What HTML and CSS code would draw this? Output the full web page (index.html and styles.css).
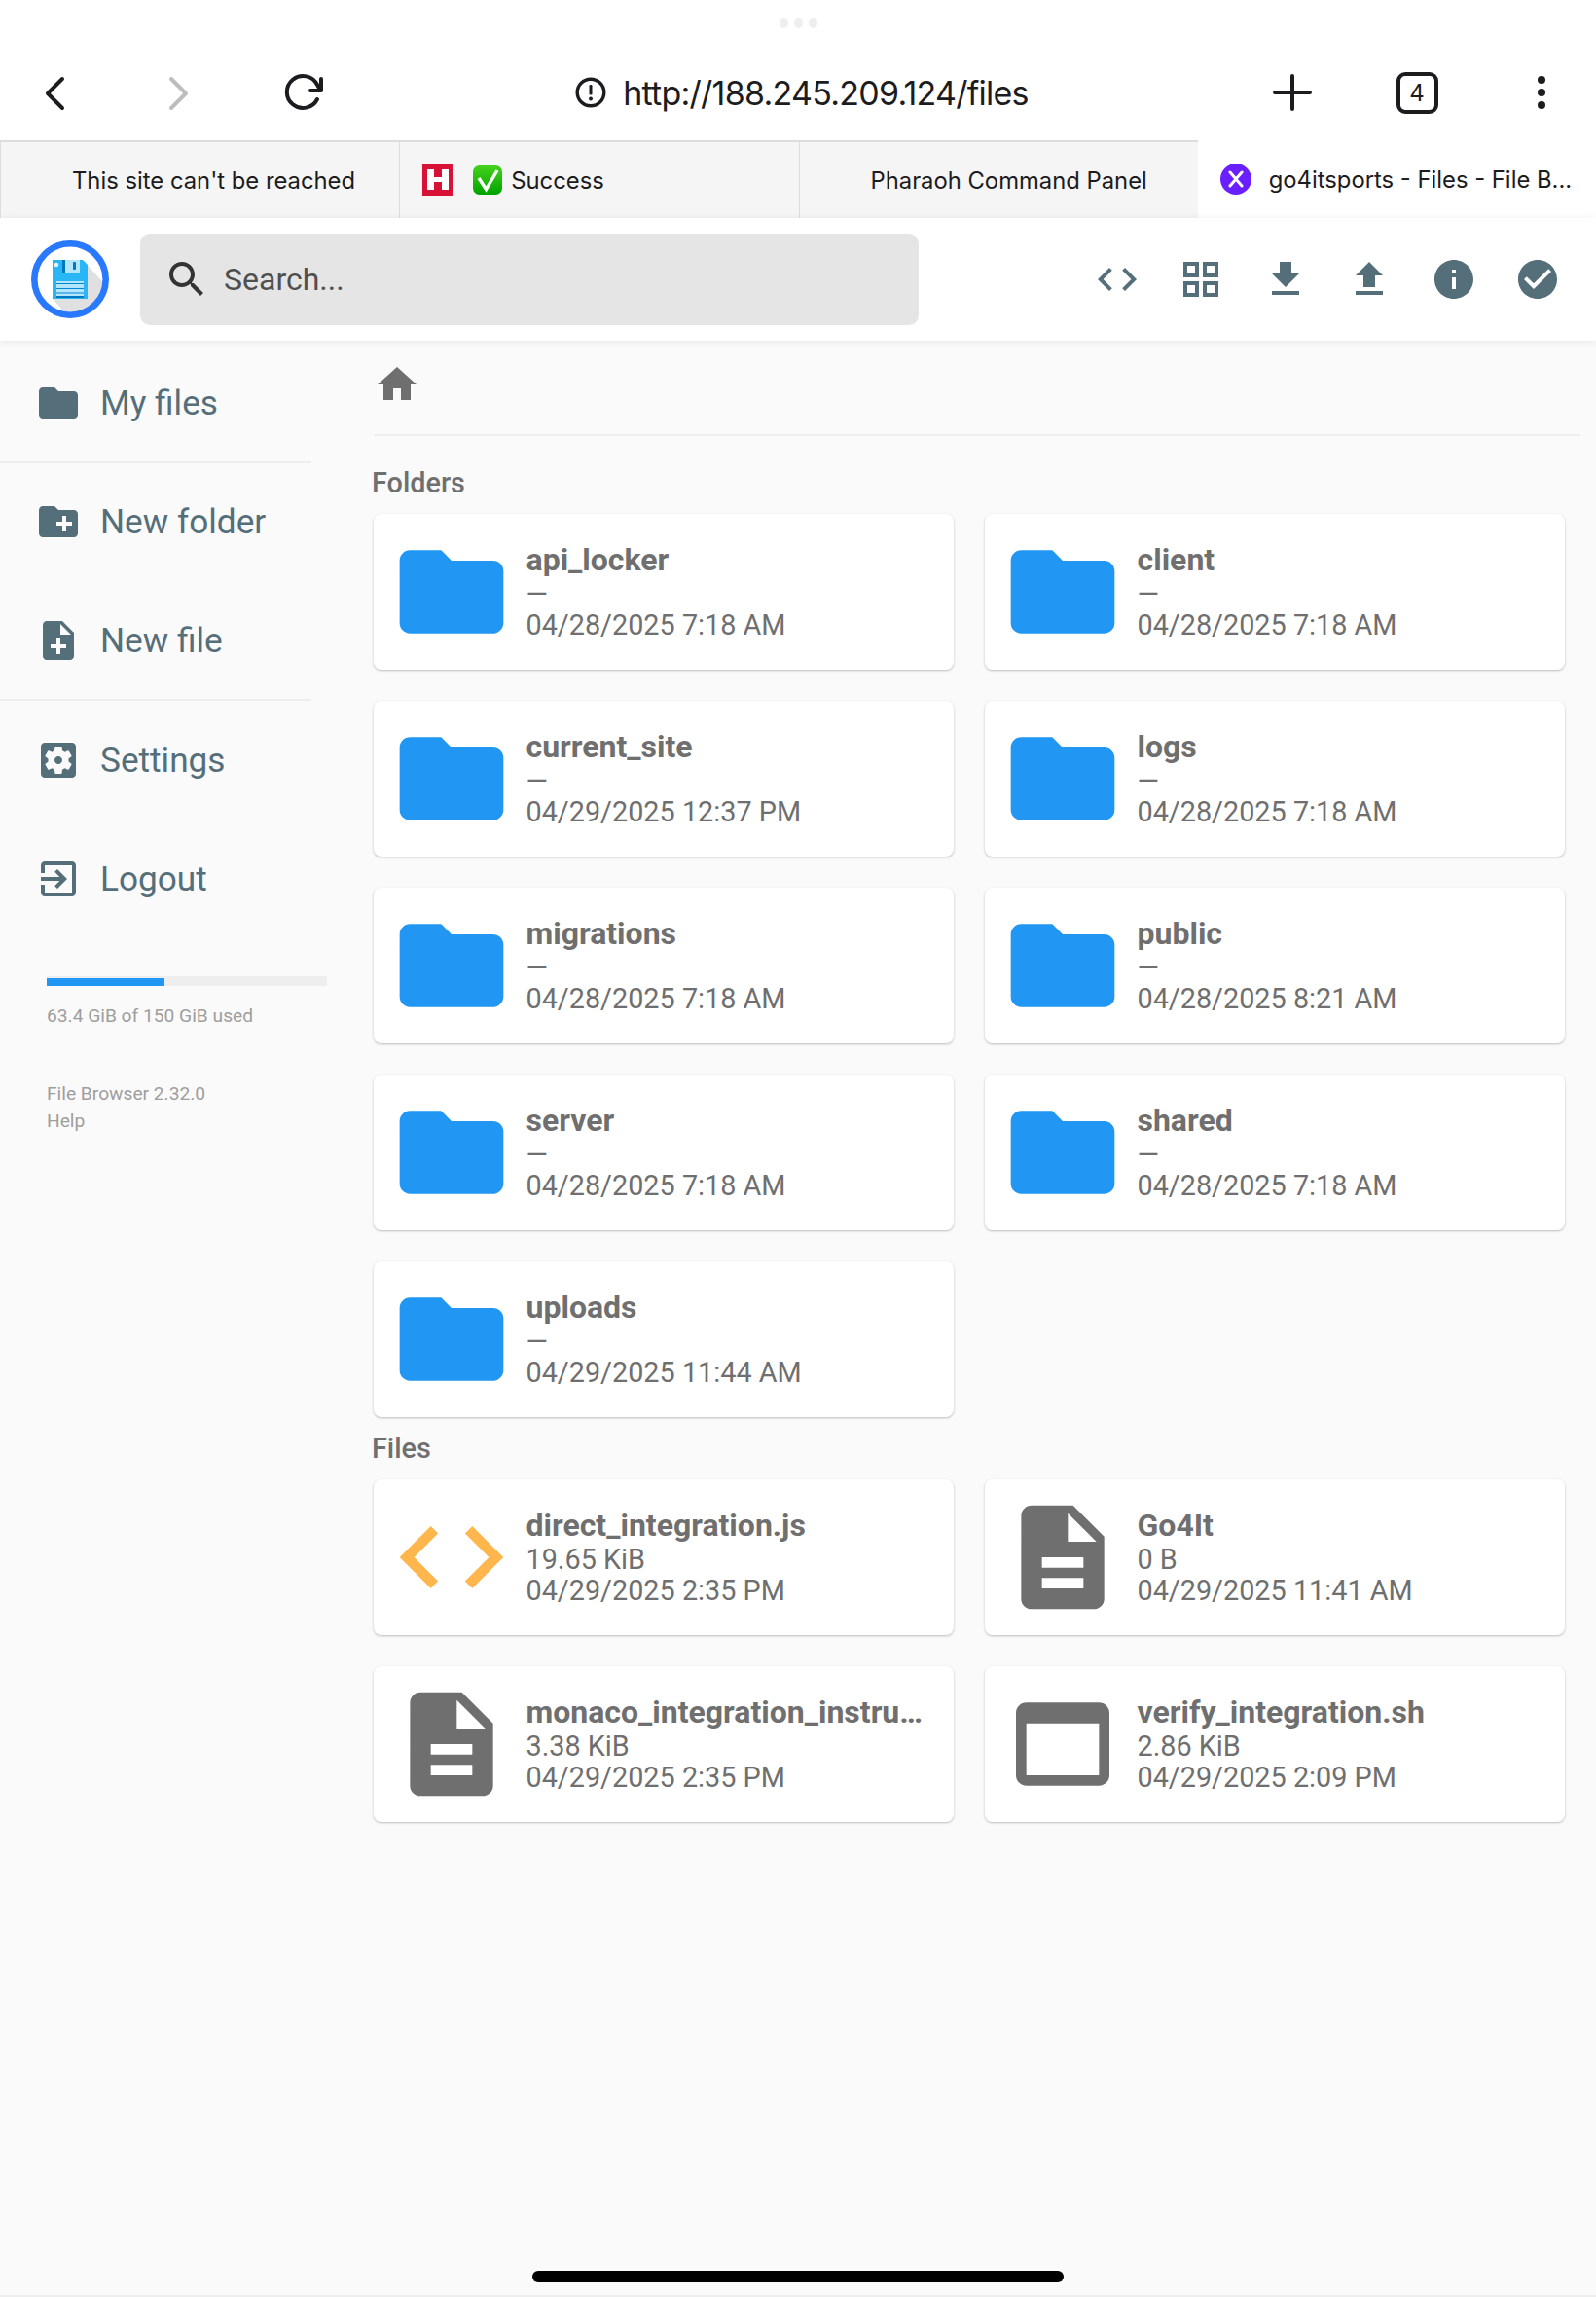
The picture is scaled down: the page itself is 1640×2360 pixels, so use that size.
FILE: index.html
```html
<!DOCTYPE html>
<html lang="en">
<head>
    <meta charset="UTF-8">
    <title>go4itsports - Files - File Browser</title>
    <link rel="stylesheet" href="styles.css">
</head>
<body>
    <!-- Browser chrome -->
    <div class="chrome">
        <div class="grip"><span></span><span></span><span></span></div>
        <div class="chrome-bar">
            <svg class="chrome-icon" viewBox="0 0 48 48"><path class="stroke" d="M32 10 L17 25 L32 40"/></svg>
            <svg class="chrome-icon off" viewBox="0 0 48 48"><path class="stroke" d="M16 10 L31 25 L16 40"/></svg>
            <svg class="chrome-icon" viewBox="0 0 48 48"><path class="stroke" d="M38 31 A 16.500 16.500 0 1 1 38 16 L 41 21"/><path class="stroke" d="M42 10 V 22 H 31"/></svg>
            <div class="address">
                <svg class="alert" viewBox="0 0 32 32"><circle cx="16" cy="16" r="13.800" fill="none" stroke="#1c1c1e" stroke-width="3.400"/><rect x="14.500" y="8" width="3" height="10.500" rx="1.200" fill="#1c1c1e"/><circle cx="16" cy="22.600" r="2" fill="#1c1c1e"/></svg>
                <span>http://188.245.209.124/files</span>
            </div>
            <svg class="chrome-icon" viewBox="0 0 48 48"><path class="stroke" d="M24 7 V 41 M6 24 H 42"/></svg>
            <div class="tab-count"><span>4</span></div>
            <svg class="chrome-icon" viewBox="0 0 48 48"><circle cx="24" cy="11" r="4" fill="#1c1c1e"/><circle cx="24" cy="24" r="4" fill="#1c1c1e"/><circle cx="24" cy="37" r="4" fill="#1c1c1e"/></svg>
        </div>
    </div>

    <div class="tabs">
        <div class="tab"><span class="favicon"></span><span class="tab-title">This site can't be reached</span></div>
        <div class="tab">
            <svg class="favicon" viewBox="0 0 32 32"><rect width="32" height="32" fill="#d81136"/><path fill="#fff" d="M5 5 h7 v8 h8 V5 h7 v21 h-7 v-8 h-8 v8 H5 z"/></svg>
            <svg class="emoji" viewBox="0 0 30 30">
                <defs><linearGradient id="emoji-green" x1="0" y1="0" x2="0" y2="1"><stop offset="0" stop-color="#45d21c"/><stop offset="1" stop-color="#00a300"/></linearGradient></defs>
                <rect width="30" height="30" rx="6.500" fill="url(#emoji-green)"/>
                <path d="M6 13 L13.500 24.500 L25 5" fill="none" stroke="#fff" stroke-width="3.400"/>
            </svg>
            <span class="tab-title">Success</span>
        </div>
        <div class="tab"><span class="favicon"></span><span class="tab-title">Pharaoh Command Panel</span></div>
        <div class="tab active">
            <svg class="favicon" viewBox="0 0 32 32"><circle cx="16" cy="16" r="16" fill="#6a1fff"/><path d="M10 9 L22 23 M22 9 L10 23" stroke="#fff" stroke-width="3" stroke-linecap="round"/></svg>
            <span class="tab-title">go4itsports - Files - File B...</span>
        </div>
    </div>

    <!-- File browser header -->
    <header class="top">
        <svg class="logo" viewBox="0 0 80 80">
            <defs><clipPath id="logo-clip"><circle cx="40" cy="40" r="35"/></clipPath></defs>
            <circle cx="40" cy="40" r="36" fill="#fff"/>
            <polygon clip-path="url(#logo-clip)" points="53,20 82,52 82,82 42,82 22,60" fill="#e0e0e0"/>
            <path d="M22 20 H53 L58 25 V60 H22 Z" fill="#29b6f6"/>
            <rect x="32" y="20" width="18" height="14" fill="#b3e5fc"/>
            <rect x="32" y="20" width="3" height="14" fill="#0277bd"/>
            <rect x="43" y="22" width="3" height="8" rx="1" fill="#0277bd"/>
            <circle cx="26" cy="25" r="2.300" fill="#e1f5fe"/>
            <rect x="26" y="42" width="28" height="16" fill="#b3e5fc"/>
            <path d="M26 44.500 H54 M26 49.500 H54 M26 54 H54" stroke="#0288d1" stroke-width="1"/>
            <rect x="26" y="57" width="28" height="2" fill="#0277bd"/>
            <circle cx="40" cy="40" r="36.700" fill="none" stroke="#2979ff" stroke-width="6.600"/>
        </svg>
        <div class="search">
            <svg class="icon search-icon" viewBox="0 0 24 24"><path d="M15.500 14h-.79l-.28-.27C15.410 12.590 16 11.110 16 9.500 16 5.910 13.090 3 9.500 3S3 5.910 3 9.500 5.910 16 9.500 16c1.610 0 3.090-.59 4.230-1.570l.27.28v.79l5 4.990L20.490 19l-4.990-5zm-6 0C7.010 14 5 11.990 5 9.500S7.010 5 9.500 5 14 7.010 14 9.500 11.990 14 9.500 14z"/></svg>
            <span>Search...</span>
        </div>
        <div class="actions">
            <svg class="icon" viewBox="0 0 24 24"><path d="M9.400 16.600L4.800 12l4.600-4.600L8 6l-6 6 6 6 1.400-1.400zm5.200 0l4.600-4.600-4.600-4.600L16 6l6 6-6 6-1.400-1.400z"/></svg>
            <svg class="icon" viewBox="0 0 24 24"><path d="M3 3v8h8V3H3zm6 6H5V5h4v4zm-6 4v8h8v-8H3zm6 6H5v-4h4v4zm4-16v8h8V3h-8zm6 6h-4V5h4v4zm-6 4v8h8v-8h-8zm6 6h-4v-4h4v4z"/></svg>
            <svg class="icon" viewBox="0 0 24 24"><path d="M19 9h-4V3H9v6H5l7 7 7-7zM5 18v2h14v-2H5z"/></svg>
            <svg class="icon" viewBox="0 0 24 24"><path d="M9 16h6v-6h4l-7-7-7 7h4zm-4 2h14v2H5z"/></svg>
            <svg class="icon" viewBox="0 0 24 24"><path d="M12 2C6.480 2 2 6.480 2 12s4.480 10 10 10 10-4.480 10-10S17.520 2 12 2zm1 15h-2v-6h2v6zm0-8h-2V7h2v2z"/></svg>
            <svg class="icon" viewBox="0 0 24 24"><path d="M12 2C6.480 2 2 6.480 2 12s4.480 10 10 10 10-4.480 10-10S17.520 2 12 2zm-2 15l-5-5 1.410-1.410L10 14.170l7.590-7.590L19 8l-9 9z"/></svg>
        </div>
    </header>

    <div class="app">
        <!-- Sidebar -->
        <nav class="sidebar">
            <div class="nav-group">
                <a class="nav-item"><svg class="icon" viewBox="0 0 24 24"><path d="M10 4H4c-1.100 0-2 .9-2 2v12c0 1.100.9 2 2 2h16c1.100 0 2-.9 2-2V8c0-1.100-.9-2-2-2h-8l-2-2z"/></svg>My files</a>
            </div>
            <div class="nav-group">
                <a class="nav-item"><svg class="icon" viewBox="0 0 24 24"><path d="M20 6h-8l-2-2H4c-1.110 0-1.990.89-1.990 2L2 18c0 1.110.89 2 2 2h16c1.110 0 2-.89 2-2V8c0-1.110-.89-2-2-2zm-1 8h-3v3h-2v-3h-3v-2h3V9h2v3h3v2z"/></svg>New folder</a>
                <a class="nav-item"><svg class="icon" viewBox="0 0 24 24"><path d="M14 2H6c-1.100 0-1.990.9-1.990 2L4 20c0 1.100.89 2 1.990 2H18c1.100 0 2-.9 2-2V8l-6-6zm2 14h-3v3h-2v-3H8v-2h3v-3h2v3h3v2zm-3-7V3.500L18.500 9H13z"/></svg>New file</a>
            </div>
            <div class="nav-group last">
                <a class="nav-item"><svg class="icon" viewBox="0 0 24 24"><path d="M12 10c-1.100 0-2 .9-2 2s.9 2 2 2 2-.9 2-2-.9-2-2-2zm7-7H5c-1.110 0-2 .9-2 2v14c0 1.100.89 2 2 2h14c1.110 0 2-.9 2-2V5c0-1.100-.89-2-2-2zm-1.750 9c0 .23-.02.46-.05.68l1.480 1.160c.13.11.17.3.08.45l-1.400 2.420c-.09.15-.27.21-.43.15l-1.740-.7c-.36.28-.76.51-1.180.69l-.26 1.850c-.03.17-.18.3-.35.3h-2.800c-.17 0-.32-.13-.35-.29l-.26-1.850c-.43-.18-.82-.41-1.180-.69l-1.740.7c-.16.06-.34 0-.43-.15l-1.400-2.420c-.09-.15-.05-.34.08-.45l1.480-1.160c-.03-.23-.05-.46-.05-.69 0-.23.02-.46.05-.68l-1.480-1.160c-.13-.11-.17-.3-.08-.45l1.400-2.420c.09-.15.27-.21.43-.15l1.740.7c.36-.28.76-.51 1.180-.69l.26-1.850c.03-.17.18-.3.35-.3h2.800c.17 0 .32.13.35.29l.26 1.850c.43.18.82.41 1.180.69l1.740-.7c.16-.06.34 0 .43.15l1.400 2.420c.09.15.05.34-.08.45l-1.480 1.160c.03.23.05.46.05.69z"/></svg>Settings</a>
                <a class="nav-item"><svg class="icon" viewBox="0 0 24 24"><path d="M10.090 15.590L11.500 17l5-5-5-5-1.410 1.410L12.670 11H3v2h9.670l-2.580 2.590zM19 3H5c-1.110 0-2 .9-2 2v4h2V5h14v14H5v-4H3v4c0 1.100.89 2 2 2h14c1.100 0 2-.9 2-2V5c0-1.100-.9-2-2-2z"/></svg>Logout</a>
            </div>
            <div class="usage">
                <div class="usage-bar"><div class="usage-fill" style="width: 42%"></div></div>
                <p>63.4 GiB of 150 GiB used</p>
            </div>
            <div class="credits">
                <p>File Browser 2.32.0</p>
                <p>Help</p>
            </div>
        </nav>

        <!-- File listing -->
        <main class="listing">
            <div class="breadcrumbs">
                <svg class="icon home" viewBox="0 0 24 24"><path d="M10 20v-6h4v6h5v-8h3L12 3 2 12h3v8z"/></svg>
            </div>
            <h2 class="section-title first">Folders</h2>
            <div class="grid">
                <div class="card">
                    <svg class="file-icon folder" viewBox="0 0 24 24"><use href="#i-folder"/></svg>
                    <div class="card-text"><p class="name">api_locker</p><p>—</p><p>04/28/2025 7:18 AM</p></div>
                </div>
                <div class="card">
                    <svg class="file-icon folder" viewBox="0 0 24 24"><use href="#i-folder"/></svg>
                    <div class="card-text"><p class="name">client</p><p>—</p><p>04/28/2025 7:18 AM</p></div>
                </div>
                <div class="card">
                    <svg class="file-icon folder" viewBox="0 0 24 24"><use href="#i-folder"/></svg>
                    <div class="card-text"><p class="name">current_site</p><p>—</p><p>04/29/2025 12:37 PM</p></div>
                </div>
                <div class="card">
                    <svg class="file-icon folder" viewBox="0 0 24 24"><use href="#i-folder"/></svg>
                    <div class="card-text"><p class="name">logs</p><p>—</p><p>04/28/2025 7:18 AM</p></div>
                </div>
                <div class="card">
                    <svg class="file-icon folder" viewBox="0 0 24 24"><use href="#i-folder"/></svg>
                    <div class="card-text"><p class="name">migrations</p><p>—</p><p>04/28/2025 7:18 AM</p></div>
                </div>
                <div class="card">
                    <svg class="file-icon folder" viewBox="0 0 24 24"><use href="#i-folder"/></svg>
                    <div class="card-text"><p class="name">public</p><p>—</p><p>04/28/2025 8:21 AM</p></div>
                </div>
                <div class="card">
                    <svg class="file-icon folder" viewBox="0 0 24 24"><use href="#i-folder"/></svg>
                    <div class="card-text"><p class="name">server</p><p>—</p><p>04/28/2025 7:18 AM</p></div>
                </div>
                <div class="card">
                    <svg class="file-icon folder" viewBox="0 0 24 24"><use href="#i-folder"/></svg>
                    <div class="card-text"><p class="name">shared</p><p>—</p><p>04/28/2025 7:18 AM</p></div>
                </div>
                <div class="card">
                    <svg class="file-icon folder" viewBox="0 0 24 24"><use href="#i-folder"/></svg>
                    <div class="card-text"><p class="name">uploads</p><p>—</p><p>04/29/2025 11:44 AM</p></div>
                </div>
            </div>
            <h2 class="section-title">Files</h2>
            <div class="grid">
                <div class="card">
                    <svg class="file-icon code" viewBox="0 0 24 24"><path d="M9.400 16.600L4.800 12l4.600-4.600L8 6l-6 6 6 6 1.400-1.400zm5.200 0l4.600-4.600-4.600-4.600L16 6l6 6-6 6-1.400-1.400z"/></svg>
                    <div class="card-text"><p class="name">direct_integration.js</p><p>19.65 KiB</p><p>04/29/2025 2:35 PM</p></div>
                </div>
                <div class="card">
                    <svg class="file-icon" viewBox="0 0 24 24"><use href="#i-doc"/></svg>
                    <div class="card-text"><p class="name">Go4It</p><p>0 B</p><p>04/29/2025 11:41 AM</p></div>
                </div>
                <div class="card">
                    <svg class="file-icon" viewBox="0 0 24 24"><use href="#i-doc"/></svg>
                    <div class="card-text"><p class="name">monaco_integration_instru…</p><p>3.38 KiB</p><p>04/29/2025 2:35 PM</p></div>
                </div>
                <div class="card">
                    <svg class="file-icon" viewBox="0 0 24 24"><path d="M19 4H5c-1.110 0-2 .9-2 2v12c0 1.100.89 2 2 2h14c1.100 0 2-.9 2-2V6c0-1.100-.89-2-2-2zm0 14H5V8h14v10z"/></svg>
                    <div class="card-text"><p class="name">verify_integration.sh</p><p>2.86 KiB</p><p>04/29/2025 2:09 PM</p></div>
                </div>
            </div>
        </main>
    </div>

    <div class="home-bar"><span></span></div>

    <!-- Shared icon shapes -->
    <svg class="defs" width="0" height="0">
        <defs>
            <path id="i-folder" d="M10 4H4c-1.100 0-2 .9-2 2v12c0 1.100.9 2 2 2h16c1.100 0 2-.9 2-2V8c0-1.100-.9-2-2-2h-8l-2-2z"/>
            <path id="i-doc" d="M14 2H6c-1.100 0-1.990.9-1.990 2L4 20c0 1.100.89 2 1.990 2H18c1.100 0 2-.9 2-2V8l-6-6zm2 16H8v-2h8v2zm0-4H8v-2h8v2zm-3-5V3.500L18.500 9H13z"/>
        </defs>
    </svg>
</body>
</html>
```

FILE: styles.css
```css
/* General page */
* {
    box-sizing: border-box;
}
html, body {
    margin: 0;
    height: 2360px;
}
body {
    display: flex;
    flex-direction: column;
    background-color: #fafafa;
    font-family: 'Roboto', sans-serif;
    color: #6f6f6f;
    overflow: hidden;
}
p {
    margin: 0;
}

/* Browser chrome */
.chrome {
    height: 144px;
    background-color: #fff;
    font-family: 'Inter', sans-serif;
    color: #1c1c1e;
}
.grip {
    display: flex;
    justify-content: center;
    gap: 6px;
    height: 71px;
    padding-top: 19px;
}
.grip span {
    width: 9px;
    height: 10px;
    border-radius: 50%;
    background-color: #eee;
}
.chrome-bar {
    display: flex;
    align-items: center;
    gap: 80px;
    height: 48px;
    padding: 0 32px;
}
.chrome-icon {
    flex: none;
    width: 48px;
    height: 48px;
}
.stroke {
    fill: none;
    stroke: #1c1c1e;
    stroke-width: 4;
    stroke-linecap: round;
    stroke-linejoin: round;
}
.off .stroke {
    stroke: #bdbdbd;
}
.address {
    flex: 1;
    display: flex;
    align-items: center;
    justify-content: center;
    gap: 17px;
    margin: 0 -80px;
    padding-left: 8px;
    font-size: 34px;
    letter-spacing: -0.75px;
    white-space: nowrap;
}
.alert {
    width: 32px;
    height: 32px;
}
.tab-count {
    flex: none;
    width: 48px;
    display: flex;
    justify-content: center;
}
.tab-count span {
    width: 43px;
    height: 43px;
    border: 4px solid #1c1c1e;
    border-radius: 9px;
    font-size: 24px;
    line-height: 35px;
    text-align: center;
}

/* Browser tabs */
.tabs {
    display: flex;
    height: 80px;
    font-family: 'Inter', sans-serif;
    font-size: 23.8px;
    color: #1c1c1e;
}
.tab {
    flex: 1;
    min-width: 0;
    display: flex;
    align-items: center;
    padding-left: 23px;
    background-color: #f5f5f5;
    border-top: 2px solid #ddd;
    border-left: 1px solid #ddd;
}
.tab.active {
    background-color: #fff;
    border: none;
}
.favicon {
    flex: none;
    width: 32px;
    height: 32px;
    margin-right: 18px;
}
.emoji {
    flex: none;
    width: 30px;
    height: 30px;
    margin-left: 2px;
    margin-right: 9px;
}
.tab-title {
    white-space: nowrap;
}

/* File browser header */
.top {
    position: relative;
    display: flex;
    align-items: center;
    height: 126px;
    padding-left: 32px;
    padding-right: 36px;
    background-color: #fff;
    box-shadow: 0 1px 8px rgba(0, 0, 0, 0.08);
}
.icon {
    flex: none;
    width: 48px;
    height: 48px;
    fill: #546e7a;
}
.logo {
    flex: none;
    width: 80px;
    height: 80px;
}
.search {
    display: flex;
    align-items: center;
    gap: 14px;
    width: 800px;
    height: 94px;
    margin-left: 32px;
    padding-left: 24px;
    background-color: #e5e5e5;
    border-radius: 10px;
    font-size: 32px;
    color: #4f4f4f;
}
.search-icon {
    fill: #333;
}
.actions {
    display: flex;
    gap: 38.4px;
    margin-left: auto;
}

/* Main area */
.app {
    flex: 1;
    display: flex;
    min-height: 0;
}

/* Sidebar */
.sidebar {
    flex: none;
    width: 384px;
    padding-top: 3px;
    color: #546e7a;
}
.nav-group {
    width: 320px;
}
.nav-group:not(.last) .nav-item:last-child {
    box-shadow: 0 1px 0 #eee, inset 0 -1px 0 #eee;
}
.nav-group.last {
    margin-top: 1px;
}
.nav-item {
    display: flex;
    align-items: center;
    gap: 19px;
    height: 122px;
    padding-left: 36px;
    padding-bottom: 1px;
    font-size: 35.2px;
}
.usage {
    width: 336px;
    margin-top: 39px;
    padding-left: 48px;
    font-size: 19.2px;
    line-height: 28px;
    color: #9e9e9e;
}
.usage-bar {
    height: 10px;
    padding-top: 2px;
    background-color: #eee;
}
.usage-fill {
    height: 8px;
    background-color: #2196f3;
}
.usage p {
    margin-top: 17px;
}
.credits {
    margin-top: 52px;
    padding-left: 48px;
    font-size: 19.2px;
    line-height: 28px;
    color: #9e9e9e;
}

/* File listing */
.listing {
    flex: 1;
    min-width: 0;
    padding-right: 16px;
}
.breadcrumbs {
    height: 98px;
    padding-top: 21px;
    border-bottom: 2px solid #eee;
}
.home {
    display: block;
    fill: #6f6f6f;
}
.section-title {
    margin: 14px 0 14px -2px;
    font-size: 28.8px;
    line-height: 36px;
    font-weight: 500;
}
.section-title.first {
    margin-top: 30px;
}
.grid {
    display: grid;
    grid-template-columns: 596px 596px;
    grid-auto-rows: 160px;
    gap: 32px;
}
.card {
    display: flex;
    align-items: center;
    min-width: 0;
    padding: 0 16px;
    background-color: #fff;
    border-radius: 8px;
    box-shadow: 0 1px 3px rgba(0, 0, 0, 0.16), 0 1px 2px rgba(0, 0, 0, 0.1);
}
.file-icon {
    flex: none;
    width: 128px;
    height: 128px;
    fill: #6f6f6f;
}
.file-icon.folder {
    fill: #2196f3;
}
.file-icon.code {
    fill: #ffb74d;
}
.card-text {
    flex: 1;
    min-width: 0;
    margin-left: 12.5px;
    padding-bottom: 2px;
    font-size: 28.8px;
    line-height: 32px;
}
.name {
    font-size: 32px;
    line-height: 38px;
    font-weight: 700;
    white-space: nowrap;
}

/* Tablet home indicator */
.home-bar {
    display: flex;
    justify-content: center;
    height: 27px;
    border-bottom: 2px solid #eee;
}
.home-bar span {
    width: 546px;
    height: 12px;
    border-radius: 6px;
    background-color: #000;
}
.defs {
    position: absolute;
}
```
